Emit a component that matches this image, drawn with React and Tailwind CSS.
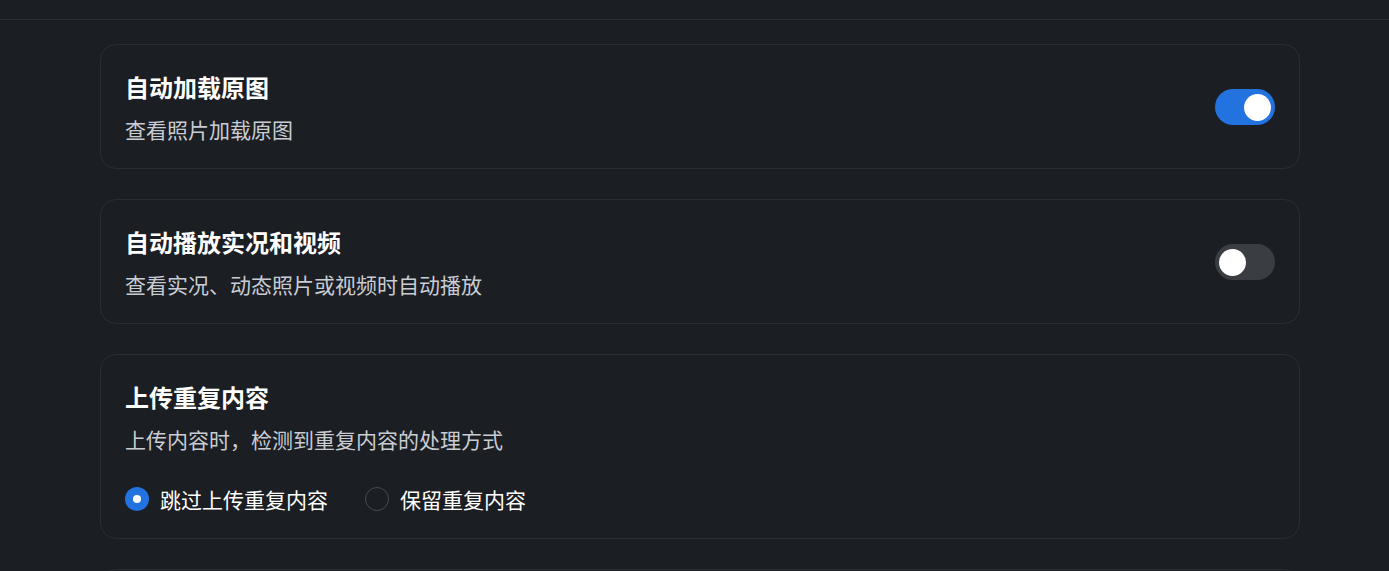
import { useState } from "react";

const FONT = {
  fontFamily: '"Microsoft YaHei", "Noto Sans CJK SC", "Noto Sans", sans-serif',
};

const Toggle = ({ on, onChange }) => (
  <button
    type="button"
    onClick={() => onChange(!on)}
    className={`mt-[2px] flex h-[36px] w-[60px] shrink-0 items-center rounded-full px-[4px] transition ${
      on ? "justify-end bg-[#2272e0]" : "justify-start bg-[#3a3d42]"
    }`}
  >
    <span className="h-[27px] w-[27px] rounded-full bg-white" />
  </button>
);

const Radio = ({ checked, label, onClick }) => (
  <button type="button" onClick={onClick} className="flex h-[28px] items-center gap-[11px]">
    {checked ? (
      <span className="flex h-[24px] w-[24px] items-center justify-center rounded-full bg-[#2272e0]">
        <span className="h-[8px] w-[8px] rounded-full bg-white" />
      </span>
    ) : (
      <span className="h-[24px] w-[24px] rounded-full border border-[#474b52]" />
    )}
    <span className="text-[21px] leading-[28px] text-white">{label}</span>
  </button>
);

const CardText = ({ title, desc }) => (
  <div className="flex flex-col">
    <div className="text-[24px] font-bold leading-[36px] text-white">{title}</div>
    <div className="mt-[10px] text-[21px] leading-[28px] text-[#c9cdd3]">{desc}</div>
  </div>
);

export default function App() {
  const [original, setOriginal] = useState(true);
  const [autoplay, setAutoplay] = useState(false);
  const [dup, setDup] = useState("skip");

  return (
    <div className="h-screen overflow-hidden bg-[#1b1e23]" style={FONT}>
      <div className="h-[20px] border-b border-[#2c2f35]" />
      <div className="ml-[100px] flex w-[1200px] flex-col gap-[30px] pt-[24px]">
        <div className="flex items-center justify-between rounded-[16px] border border-[#2a2d33] px-[24px] pt-[24px] pb-[25px]">
          <CardText title="自动加载原图" desc="查看照片加载原图" />
          <Toggle on={original} onChange={setOriginal} />
        </div>

        <div className="flex items-center justify-between rounded-[16px] border border-[#2a2d33] px-[24px] pt-[24px] pb-[25px]">
          <CardText title="自动播放实况和视频" desc="查看实况、动态照片或视频时自动播放" />
          <Toggle on={autoplay} onChange={setAutoplay} />
        </div>

        <div className="flex flex-col rounded-[16px] border border-[#2a2d33] px-[24px] pt-[24px] pb-[25px]">
          <CardText title="上传重复内容" desc="上传内容时，检测到重复内容的处理方式" />
          <div className="mt-[32px] flex items-center gap-[37px]">
            <Radio checked={dup === "skip"} label="跳过上传重复内容" onClick={() => setDup("skip")} />
            <Radio checked={dup === "keep"} label="保留重复内容" onClick={() => setDup("keep")} />
          </div>
        </div>

        <div className="h-[124px] shrink-0 rounded-[16px] border border-[#2a2d33]" />
      </div>
    </div>
  );
}
